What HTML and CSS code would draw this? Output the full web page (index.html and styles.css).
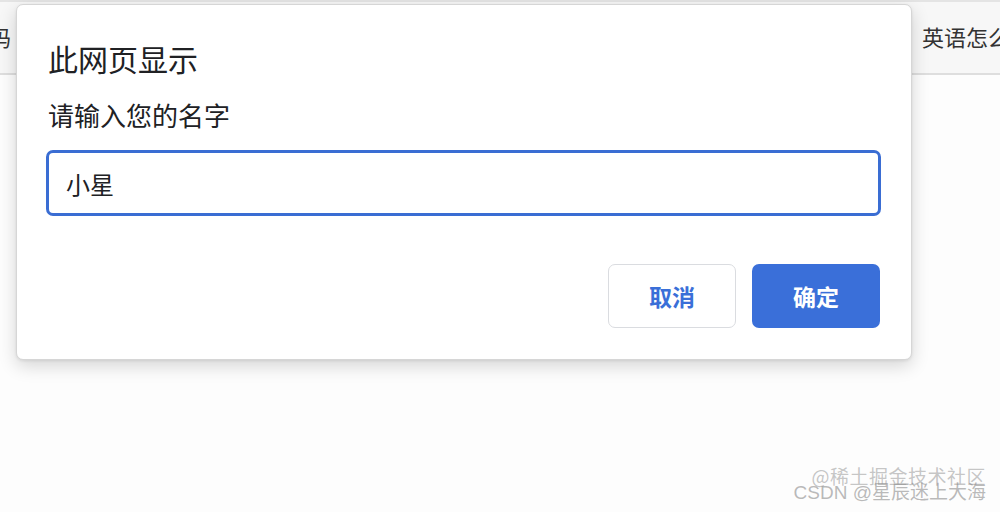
FILE: index.html
```html
<!DOCTYPE html>
<html lang="zh">
<head>
<meta charset="utf-8">
<link rel="stylesheet" href="styles.css">
</head>
<body>
<div class="page">
  <div class="toolbar">
    <div class="tb-left"><span>验证码</span></div>
    <div class="tb-right">英语怎么说</div>
  </div>
  <div class="content"></div>
</div>

<div class="dialog">
  <div class="title">此网页显示</div>
  <div class="label">请输入您的名字</div>
  <div class="input">小星</div>
  <div class="actions">
    <button class="btn btn-cancel">取消</button>
    <button class="btn btn-ok">确定</button>
  </div>
</div>

<div class="watermark">
  <div class="wm wm-juejin">@稀土掘金技术社区</div>
  <div class="wm wm-csdn">CSDN @星辰迷上大海</div>
</div>
</body>
</html>
```
FILE: styles.css
```css
html, body {
  margin: 0;
  padding: 0;
  width: 1000px;
  height: 512px;
  overflow: hidden;
  background: #ffffff;
  font-family: "Noto Sans CJK SC", "Noto Sans", sans-serif;
  color: #202124;
}

.page {
  height: 512px;
  display: flex;
  flex-direction: column;
}

.toolbar {
  height: 71px;
  border-top: 2px solid #e4e4e4;
  border-bottom: 2px solid #dedede;
  background: #f7f7f7;
  display: flex;
  justify-content: space-between;
  align-items: center;
  font-size: 22px;
  color: #333;
}

.tb-left {
  width: 11px;
  overflow: hidden;
  direction: rtl;
  white-space: nowrap;
  margin-top: -4px;
}

.tb-right {
  width: 78px;
  overflow: hidden;
  white-space: nowrap;
  margin-top: -4px;
}

.content {
  flex: 1;
  background: #fdfdfd;
}

.dialog {
  position: absolute;
  left: 16px;
  top: 4px;
  width: 896px;
  height: 356px;
  box-sizing: border-box;
  background: #ffffff;
  border-radius: 7px;
  border: 1px solid #d6d6d6;
  box-shadow: 0 6px 18px rgba(0, 0, 0, 0.16), 0 1px 3px rgba(0, 0, 0, 0.08);
  padding: 36px 30px 31px 29px;
  display: flex;
  flex-direction: column;
}

.title {
  font-size: 30px;
  line-height: 34px;
  height: 34px;
  padding-left: 2px;
  color: #202124;
}

.label {
  margin-top: 25px;
  font-size: 26px;
  line-height: 30px;
  padding-left: 2px;
  color: #202124;
}

.input {
  margin-top: 20px;
  height: 66px;
  flex-shrink: 0;
  box-sizing: border-box;
  border: 3px solid #3a6dd3;
  border-radius: 7px;
  padding-left: 17px;
  display: flex;
  align-items: center;
  font-size: 24px;
  color: #202124;
}

.actions {
  margin-top: 48px;
  display: flex;
  justify-content: flex-end;
  gap: 16px;
  padding-right: 1px;
}

.btn {
  width: 128px;
  height: 64px;
  border-radius: 7px;
  font-family: "Noto Sans CJK SC", "Noto Sans", sans-serif;
  font-size: 23px;
  font-weight: 700;
  cursor: pointer;
  padding: 0;
}

.btn-cancel {
  background: #ffffff;
  border: 1px solid #dadce0;
  color: #3a6fd8;
}

.btn-ok {
  background: #3a6fd9;
  border: none;
  color: #ffffff;
}

.watermark {
  position: absolute;
  right: 14px;
  bottom: 6px;
  width: 200px;
  height: 50px;
}

.wm {
  position: absolute;
  right: 0;
  white-space: nowrap;
  font-size: 19px;
  line-height: 22px;
}

.wm-juejin {
  top: 9px;
  color: rgba(150, 150, 150, 0.55);
  letter-spacing: 0.5px;
}

.wm-csdn {
  top: 26px;
  color: rgba(140, 140, 140, 0.6);
  font-family: "Liberation Sans", "Noto Sans CJK SC", sans-serif;
}
```
